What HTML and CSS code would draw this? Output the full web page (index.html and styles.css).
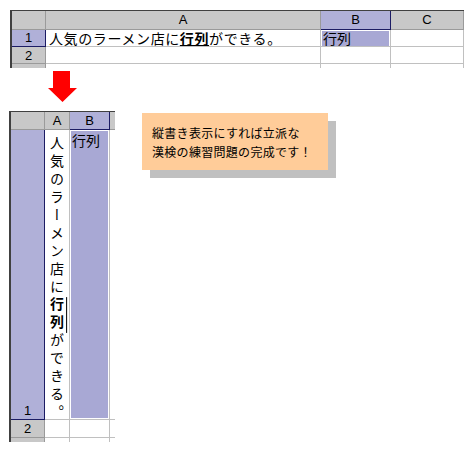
FILE: index.html
```html
<!DOCTYPE html>
<html lang="ja">
<head>
<meta charset="utf-8">
<link rel="stylesheet" href="styles.css">
</head>
<body>
<div class="page">
  <div class="sheet top">
    <div class="c h"></div>
    <div class="c h">A</div>
    <div class="c h hs">B</div>
    <div class="c h">C</div>

    <div class="c h rs">1</div>
    <div class="c txt">人気のラーメン店に<span class="em">行列</span>ができる。</div>
    <div class="c"><div class="sel">行列</div></div>
    <div class="c"></div>

    <div class="c h">2</div>
    <div class="c"></div>
    <div class="c"></div>
    <div class="c"></div>

    <div class="c h cut"></div>
    <div class="c cut"></div>
    <div class="c cut"></div>
    <div class="c cut"></div>
  </div>

  <div class="arrow">
    <svg width="30" height="32" viewBox="0 0 30 32">
      <polygon points="5,0 22,0 22,17 29,17 14.5,31 0,17 5,17" fill="#ff0000"/>
    </svg>
  </div>

  <div class="lower">
    <div class="sheet bottom">
      <div class="c h"></div>
      <div class="c h">A</div>
      <div class="c h hs">B</div>
      <div class="c h noR"></div>

      <div class="c h rs big">1</div>
      <div class="c vcell"><div class="vtext">人気のラーメン店に<span class="em">行列</span>ができる。</div></div>
      <div class="c"><div class="sel tall">行列</div></div>
      <div class="c noR"></div>

      <div class="c h">2</div>
      <div class="c"></div>
      <div class="c"></div>
      <div class="c noR"></div>

      <div class="c h cut"></div>
      <div class="c cut"></div>
      <div class="c cut"></div>
      <div class="c cut noR"></div>
    </div>

    <div class="note">縦書き表示にすれば立派な<br>漢検の練習問題の完成です！</div>
  </div>
</div>
</body>
</html>
```

FILE: styles.css
```css
html, body {
  margin: 0;
  padding: 0;
  background: #ffffff;
}

.page {
  padding: 10px 0 0 9px;
  font-family: "Noto Sans CJK JP", sans-serif;
  color: #000;
}

.sheet {
  display: grid;
  border-top: 1px solid #404040;
  border-left: 2px solid #404040;
  box-sizing: border-box;
}

.top {
  margin-left: 1px;
  width: max-content;
  grid-template-columns: 34px 275px 70px 73px;
  grid-template-rows: 19px 17px 17px 4px;
}

.bottom {
  width: max-content;
  grid-template-columns: 34px 25px 40px 5px;
  grid-template-rows: 18px 290px 18px 4px;
}

.c {
  box-sizing: border-box;
  border-right: 1px solid #c0c0c0;
  border-bottom: 1px solid #c0c0c0;
  position: relative;
}

.cut {
  border-bottom: none;
}

.noR {
  border-right: none;
}

.h {
  background: #c8c8c8;
  border-right-color: #9a9a9a;
  border-bottom-color: #9a9a9a;
  font-family: "Liberation Sans", sans-serif;
  font-size: 13px;
  line-height: 18px;
  text-align: center;
}

.hs {
  background: #b0b0d8;
  border-right-color: #1c1c64;
  border-bottom-color: #1c1c64;
}

.rs {
  background: #b0b0d8;
  border-right-color: #1c1c64;
  border-bottom-color: #1c1c64;
  line-height: 16px;
}

.big {
  display: flex;
  align-items: flex-end;
  justify-content: center;
  line-height: 16px;
}

.txt {
  font-size: 14px;
  line-height: 16px;
  letter-spacing: 0.6px;
  padding-left: 3px;
  white-space: nowrap;
}

.em {
  font-weight: bold;
  text-decoration: underline;
  text-underline-position: right;
  text-underline-offset: 1px;
}

.sel {
  margin: 1px 1px 0 1px;
  height: 15px;
  background: #a8a8d4;
  font-size: 14px;
  line-height: 15px;
  padding-left: 1px;
  white-space: nowrap;
}

.sel.tall {
  height: 287px;
  line-height: 18px;
}

.vcell {
  display: flex;
  justify-content: center;
}

.vtext {
  writing-mode: vertical-rl;
  text-orientation: upright;
  font-size: 14px;
  line-height: 22px;
  letter-spacing: 3.9px;
  padding-top: 6px;
  white-space: nowrap;
}

.arrow {
  height: 43px;
  padding-left: 39px;
  padding-top: 3px;
  box-sizing: border-box;
}

.arrow svg {
  display: block;
}

.lower {
  display: flex;
  align-items: flex-start;
}

.note {
  margin-left: 27px;
  margin-top: 2px;
  width: 186px;
  height: 57px;
  box-sizing: border-box;
  background: #ffcc99;
  box-shadow: 8px 8px 0 #c0c0c0;
  font-size: 12px;
  line-height: 19px;
  letter-spacing: 0.3px;
  padding: 10px 0 0 10px;
  white-space: nowrap;
}
```
